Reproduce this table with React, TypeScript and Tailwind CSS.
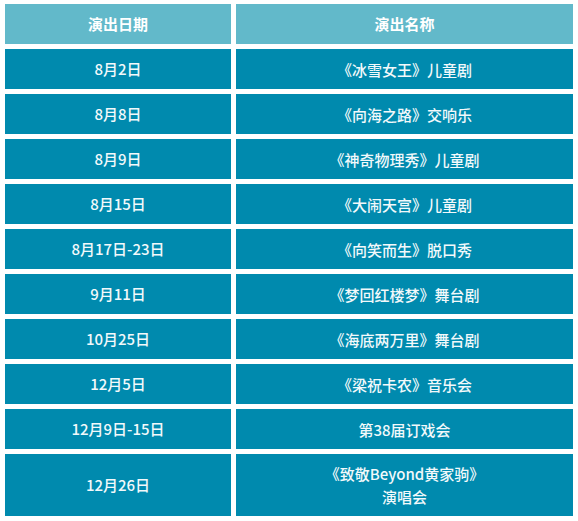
const rows: [string, string[]][] = [
  ["8月2日", ["《冰雪女王》儿童剧"]],
  ["8月8日", ["《向海之路》交响乐"]],
  ["8月9日", ["《神奇物理秀》儿童剧"]],
  ["8月15日", ["《大闹天宫》儿童剧"]],
  ["8月17日-23日", ["《向笑而生》脱口秀"]],
  ["9月11日", ["《梦回红楼梦》舞台剧"]],
  ["10月25日", ["《海底两万里》舞台剧"]],
  ["12月5日", ["《梁祝卡农》音乐会"]],
  ["12月9日-15日", ["第38届订戏会"]],
  ["12月26日", ["《致敬Beyond黄家驹》", "演唱会"]],
];

export default function App() {
  return (
    <div
      className="min-h-screen bg-white px-[5px] pt-[4px] text-[15px] text-white"
      style={{ fontFamily: '"Noto Sans CJK SC", "Noto Sans", sans-serif' }}
    >
      <div className="grid grid-cols-[226px_337px] gap-[5px]">
        <div className="flex h-[40px] items-center justify-center bg-[#62b9ca] font-bold">
          演出日期
        </div>
        <div className="flex h-[40px] items-center justify-center bg-[#62b9ca] font-bold">
          演出名称
        </div>
        {rows.map(([date, name]) => (
          <div key={date} className="contents">
            <div
              className={`flex items-center justify-center bg-[#008aae] font-medium text-[#f2f9fb] ${
                name.length > 1 ? "h-[62px]" : "h-[40px]"
              }`}
            >
              {date}
            </div>
            <div
              className={`flex flex-col items-center justify-center bg-[#008aae] font-medium leading-[23px] text-[#f2f9fb] ${
                name.length > 1 ? "h-[62px]" : "h-[40px]"
              }`}
            >
              {name.map((line) => (
                <span key={line}>{line}</span>
              ))}
            </div>
          </div>
        ))}
      </div>
    </div>
  );
}
